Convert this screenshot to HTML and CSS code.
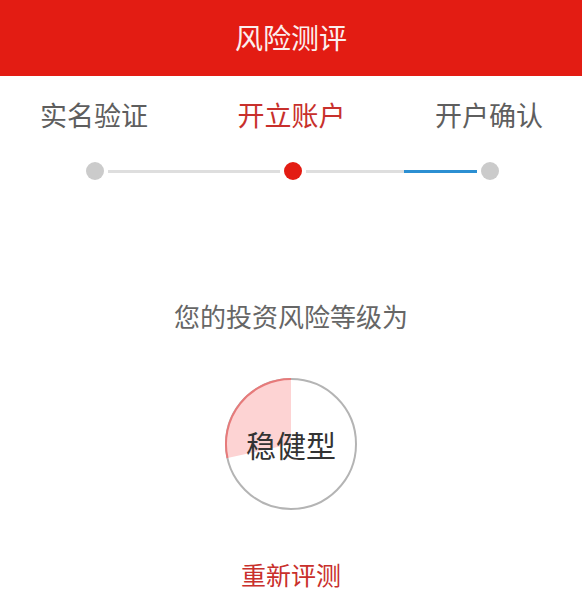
FILE: index.html
```html
<!DOCTYPE html>
<html lang="zh-CN">
<head>
  <meta charset="UTF-8">
  <meta name="viewport" content="width=device-width, initial-scale=1.0">
  <title>风险测评</title>
  <link rel="stylesheet" href="styles.css">
</head>
<body>
  <header class="header">风险测评</header>

  <div class="steps">
    <span class="step">实名验证</span>
    <span class="step active">开立账户</span>
    <span class="step">开户确认</span>
  </div>
  <div class="track">
    <span class="dot"></span>
    <span class="line"></span>
    <span class="dot active"></span>
    <span class="line line-progress"></span>
    <span class="dot"></span>
  </div>

  <div class="result">
    <p class="result-label">您的投资风险等级为</p>
    <div class="gauge">
      <svg width="134" height="134" viewBox="0 0 134 134">
        <circle cx="67" cy="67" r="65" fill="#fff" stroke="#b4b4b4" stroke-width="2"/>
        <path d="M67,67 L67,2 A65,65 0 0 0 3.5,81 Z" fill="#fdd3d3"/>
        <path d="M67,2 A65,65 0 0 0 3.5,81" fill="none" stroke="#e77a7a" stroke-width="2"/>
      </svg>
      <span class="gauge-text">稳健型</span>
    </div>
    <a class="retest" href="#">重新评测</a>
  </div>
</body>
</html>
```

FILE: styles.css
```css
body {
  margin: 0;
  background-color: #fff;
  font-family: "Noto Sans CJK SC", "Noto Sans", sans-serif;
}
.header {
  height: 76px;
  line-height: 74px;
  background-color: #e31c13;
  color: #fbeeee;
  text-align: center;
  font-size: 28px;
}
.steps {
  display: flex;
  justify-content: space-between;
  padding: 0 39px 0 40px;
  margin-top: 22px;
  font-size: 27px;
  line-height: 34px;
  color: #5e5e5e;
}
.step.active {
  color: #c8302c;
}
.track {
  display: flex;
  align-items: center;
  padding: 0 83px 0 86px;
  margin-top: 29px;
  height: 20px;
}
.dot {
  width: 18px;
  height: 18px;
  border-radius: 50%;
  background-color: #cbcbcb;
  flex: none;
}
.dot.active {
  background-color: #e31c13;
}
.line {
  flex: 1;
  height: 3px;
  margin: 0 4px;
  background-color: #dedede;
}
.line-progress {
  background: linear-gradient(to right, #dedede 0, #dedede 57.6%, #2b8fd2 57.6%, #2b8fd2 100%);
}
.result {
  display: flex;
  flex-direction: column;
  align-items: center;
}
.result-label {
  margin: 118px 0 0;
  font-size: 26px;
  line-height: 34px;
  color: #666;
}
.gauge {
  position: relative;
  width: 134px;
  height: 134px;
  margin-top: 44px;
}
.gauge svg {
  display: block;
}
.gauge-text {
  position: absolute;
  left: 0;
  right: 0;
  top: 50%;
  transform: translateY(-50%);
  text-align: center;
  font-size: 30px;
  color: #333;
}
.retest {
  margin-top: 46px;
  font-size: 25px;
  line-height: 34px;
  color: #c9302c;
  text-decoration: none;
}
```
